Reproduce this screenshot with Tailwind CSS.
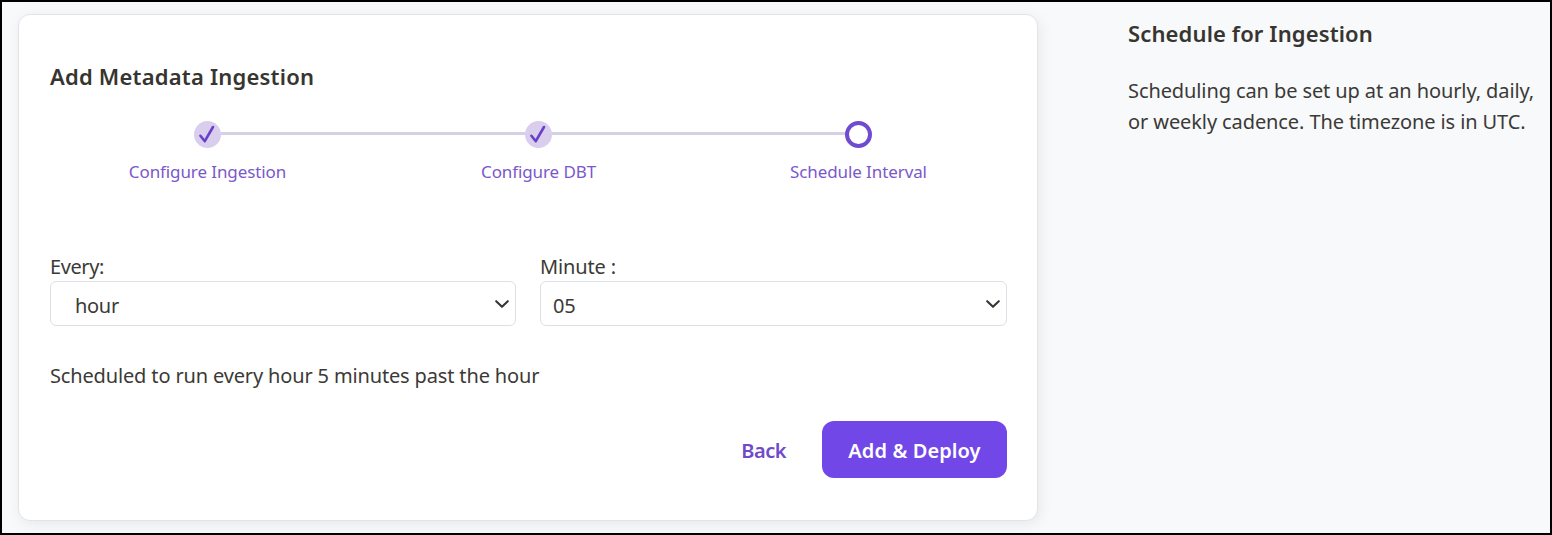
<!DOCTYPE html>
<html lang="en">
<head>
<meta charset="utf-8">
<title>Add Metadata Ingestion</title>
<script src="https://cdn.jsdelivr.net/npm/@tailwindcss/browser@4"></script>
</head>
<body class="h-[535px] w-[1552px] overflow-hidden border-2 border-black bg-[#f8f9fb] font-['Noto_Sans',sans-serif] text-[20px] leading-[30px] tracking-[-0.15px] text-[#3b3a36]">
<div class="flex items-start pt-3 pl-4">
  <main class="flex h-[507px] w-[1020px] shrink-0 flex-col rounded-xl border border-[#e2e4e8] bg-white pt-[46px] pr-[30px] pl-[31px] shadow-[2px_3px_14px_rgba(0,0,0,0.07)]">
    <h1 class="text-[22px] leading-[30px] font-semibold tracking-[0.2px] text-[#37352f]">Add Metadata Ingestion</h1>
    <ol class="mt-[30px] -ml-[3px] flex h-[66px] justify-center text-[17px] leading-6 tracking-[-0.1px] text-[#7a58cc]">
      <li class="flex w-[331px] shrink-0 flex-col items-center">
        <div class="flex h-[27px] w-full items-center">
          <span class="h-[3px] flex-1"></span>
          <svg class="size-[27px]" viewBox="0 0 27 27" fill="none"><circle cx="13.5" cy="13.5" r="13.5" fill="#d9ceee"/><path d="M6.4 14.8 10.8 20.2 19 6" stroke="#6941c6" stroke-width="2.6" stroke-linecap="round" stroke-linejoin="round"/></svg>
          <span class="mb-0.5 h-[3px] flex-1 bg-[#d6d0e3]"></span>
        </div>
        <span class="mt-3 pl-px">Configure Ingestion</span>
      </li>
      <li class="flex w-[331px] shrink-0 flex-col items-center">
        <div class="flex h-[27px] w-full items-center">
          <span class="mb-0.5 h-[3px] flex-1 bg-[#d6d0e3]"></span>
          <svg class="size-[27px]" viewBox="0 0 27 27" fill="none"><circle cx="13.5" cy="13.5" r="13.5" fill="#d9ceee"/><path d="M6.4 14.8 10.8 20.2 19 6" stroke="#6941c6" stroke-width="2.6" stroke-linecap="round" stroke-linejoin="round"/></svg>
          <span class="mb-0.5 h-[3px] flex-1 bg-[#d6d0e3]"></span>
        </div>
        <span class="mt-3 pl-px">Configure DBT</span>
      </li>
      <li class="flex w-[309px] shrink-0 flex-col items-center">
        <div class="flex h-[27px] w-full items-center">
          <span class="mb-0.5 h-[3px] flex-1 bg-[#d6d0e3]"></span>
          <span class="size-[27px] rounded-full border-4 border-[#6f4bd0] bg-white"></span>
          <span class="h-[3px] flex-1"></span>
        </div>
        <span class="mt-3 pl-px">Schedule Interval</span>
      </li>
    </ol>
    <div class="mt-[65px] grid grid-cols-[466px_467px] gap-6">
      <div>
        <div class="h-[29px] tracking-[-0.4px]">Every:</div>
        <div class="flex h-[45px] items-center justify-between rounded-md border border-[#dde0e6] bg-white pr-[5px] pl-6">
          <span class="pt-1 tracking-[-0.3px]">hour</span>
          <svg class="size-4" viewBox="0 0 16 16" fill="none" stroke="#37352f" stroke-width="2.1" stroke-linecap="round" stroke-linejoin="round"><path d="M2.2 5.2 8 10.8 13.8 5.2"/></svg>
        </div>
      </div>
      <div>
        <div class="h-[29px]">Minute :</div>
        <div class="flex h-[45px] items-center justify-between rounded-md border border-[#dde0e6] bg-white pr-[5px] pl-3">
          <span class="pt-1">05</span>
          <svg class="size-4" viewBox="0 0 16 16" fill="none" stroke="#37352f" stroke-width="2.1" stroke-linecap="round" stroke-linejoin="round"><path d="M2.2 5.2 8 10.8 13.8 5.2"/></svg>
        </div>
      </div>
    </div>
    <p class="mt-[35px]">Scheduled to run every hour 5 minutes past the hour</p>
    <div class="mt-[30px] flex h-[57px] items-center justify-end gap-9 font-semibold">
      <button class="pt-0.5 tracking-[-0.5px] text-[#6f4bcb]">Back</button>
      <button class="flex h-[57px] w-[185px] items-center justify-center rounded-xl bg-[#7147e8] pt-0.5 tracking-[0.1px] text-white">Add &amp; Deploy</button>
    </div>
  </main>
  <aside class="ml-[90px] flex-1 pt-1">
    <h2 class="text-[22px] font-semibold tracking-[0.13px] text-[#37352f]">Schedule for Ingestion</h2>
    <p class="mt-[27px] leading-[31px] tracking-[-0.1px] whitespace-nowrap">Scheduling can be set up at an hourly, daily,<br>or weekly cadence. The timezone is in UTC.</p>
  </aside>
</div>
</body>
</html>
